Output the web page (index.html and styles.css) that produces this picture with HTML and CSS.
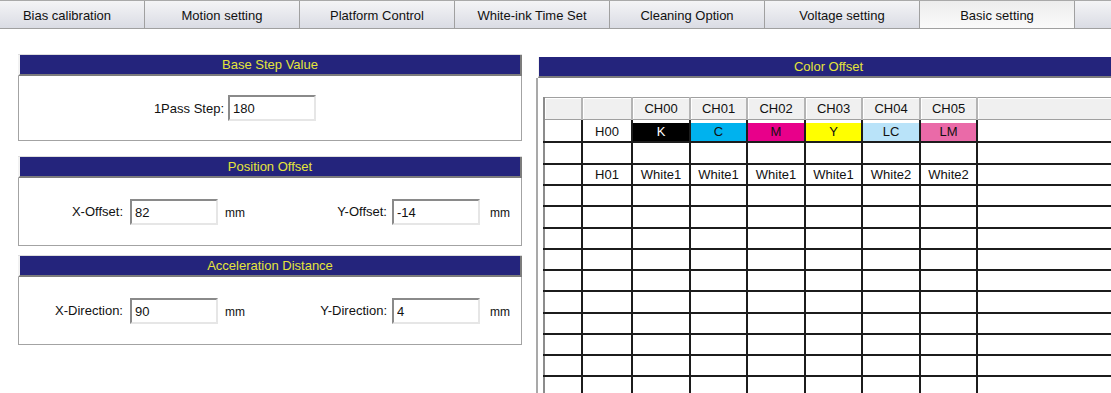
FILE: index.html
```html
<!DOCTYPE html>
<html>
<head>
    <title>Basic setting</title>
    <link rel="stylesheet" href="styles.css">
</head>
<body>
    <div class="tabs">
        <div class="tab first">Bias calibration</div>
        <div class="tab">Motion setting</div>
        <div class="tab">Platform Control</div>
        <div class="tab">White-ink Time Set</div>
        <div class="tab">Cleaning Option</div>
        <div class="tab">Voltage setting</div>
        <div class="tab active">Basic setting</div>
        <div class="tab"></div>
    </div>

    <div class="main">
        <div class="left">
            <div class="panel p1">
                <div class="panel-head">Base Step Value</div>
                <div class="panel-body b1">
                    <span class="lbl step">1Pass Step:</span>
                    <input class="field" type="text" value="180">
                </div>
            </div>

            <div class="panel p2">
                <div class="panel-head">Position Offset</div>
                <div class="panel-body">
                    <span class="lbl">X-Offset:</span>
                    <input class="field" type="text" value="82">
                    <span class="unit">mm</span>
                    <span class="lbl wide">Y-Offset:</span>
                    <input class="field" type="text" value="-14">
                    <span class="unit last">mm</span>
                </div>
            </div>

            <div class="panel p3">
                <div class="panel-head">Acceleration Distance</div>
                <div class="panel-body">
                    <span class="lbl">X-Direction:</span>
                    <input class="field" type="text" value="90">
                    <span class="unit">mm</span>
                    <span class="lbl wide">Y-Direction:</span>
                    <input class="field" type="text" value="4">
                    <span class="unit last">mm</span>
                </div>
            </div>
        </div>

        <div class="right">
            <div class="panel-head">Color Offset</div>
            <div class="right-body">
                <table class="grid">
                    <colgroup>
                        <col style="width:38px"><col style="width:50px">
                        <col style="width:58px"><col style="width:57px">
                        <col style="width:58px"><col style="width:57px">
                        <col style="width:58px"><col style="width:57px">
                        <col>
                    </colgroup>
                    <tr class="head">
                        <th></th><th></th><th>CH00</th><th>CH01</th><th>CH02</th><th>CH03</th><th>CH04</th><th>CH05</th><th></th>
                    </tr>
                    <tr class="colors t">
                        <td></td><td>H00</td>
                        <td class="k">K</td><td class="c">C</td><td class="m">M</td>
                        <td class="y">Y</td><td class="lc">LC</td><td class="lm">LM</td><td></td>
                    </tr>
                    <tr class="t"><td></td><td></td><td></td><td></td><td></td><td></td><td></td><td></td><td></td></tr>
                    <tr>
                        <td></td><td>H01</td>
                        <td>White1</td><td>White1</td><td>White1</td><td>White1</td><td>White2</td><td>White2</td><td></td>
                    </tr>
                    <tr><td></td><td></td><td></td><td></td><td></td><td></td><td></td><td></td><td></td></tr>
                    <tr class="t"><td></td><td></td><td></td><td></td><td></td><td></td><td></td><td></td><td></td></tr>
                    <tr><td></td><td></td><td></td><td></td><td></td><td></td><td></td><td></td><td></td></tr>
                    <tr><td></td><td></td><td></td><td></td><td></td><td></td><td></td><td></td><td></td></tr>
                    <tr><td></td><td></td><td></td><td></td><td></td><td></td><td></td><td></td><td></td></tr>
                    <tr class="t"><td></td><td></td><td></td><td></td><td></td><td></td><td></td><td></td><td></td></tr>
                    <tr><td></td><td></td><td></td><td></td><td></td><td></td><td></td><td></td><td></td></tr>
                    <tr><td></td><td></td><td></td><td></td><td></td><td></td><td></td><td></td><td></td></tr>
                    <tr><td></td><td></td><td></td><td></td><td></td><td></td><td></td><td></td><td></td></tr>
                    <tr><td></td><td></td><td></td><td></td><td></td><td></td><td></td><td></td><td></td></tr>
                </table>
            </div>
        </div>
    </div>
</body>
</html>
```

FILE: styles.css
```css
* { box-sizing: border-box; }
body { margin: 0; background: #fff; font-family: "Liberation Sans", Arial, sans-serif; font-size: 13px; color: #111; overflow: hidden; height: 393px; }

.tabs { display: flex; height: 29px; border-top: 1px solid #a9a9a9; border-bottom: 1px solid #a0a0a0; overflow: hidden; }
.tab { flex: none; width: 155px; height: 27px; line-height: 29px; text-align: center; border-right: 1px solid #a0a0a0; background: linear-gradient(#f4f4f6, #dadce4); }
.tab.first { margin-left: -10px; }
.tab.active { background: linear-gradient(#ededed, #fbfbfb); height: 28px; }

.main { display: flex; align-items: flex-start; padding-top: 25px; }
.left { flex: none; width: 504px; margin-left: 18px; }

.panel { border-top: 1px solid #dedede; }
.p2 { margin-top: 15px; }
.p3 { margin-top: 9px; }
.panel-head { height: 21px; line-height: 19px; text-align: center; background: #24247c; color: #e4e43a; border-left: 2px solid #f2f2f2; border-right: 2px solid #7c7c7c; border-bottom: 2px solid #7c7c7c; }
.panel-body { display: flex; align-items: center; height: 68px; border: 1px solid #a3a3a3; border-top: none; }
.b1 { height: 65px; }

.lbl { width: 104px; text-align: right; margin-right: 7px; }
.lbl.step { width: 205px; margin-right: 4px; }
.lbl.wide { width: 122px; margin-right: 5px; }
.unit { width: 40px; margin-left: 7px; font-size: 12px; padding-top: 3px; }
.unit.last { width: auto; margin-left: 10px; }
.field { width: 88px; height: 26px; padding: 1px 3px 0; font: 13px "Liberation Sans", Arial, sans-serif; color: #111; border: 2px solid; border-color: #8a8a8a #e6e6e6 #e6e6e6 #8a8a8a; background: #fff; outline: none; }

.right { flex: none; width: 584px; margin-left: 14px; margin-top: 3px; }
.right .panel-head { margin-left: 2px; border-left: 1px solid #f2f2f2; height: 21px; }
.right-body { height: 330px; border-left: 2px solid #a9a9a9; padding: 19px 0 0 5px; overflow: hidden; }

.grid { border-collapse: collapse; table-layout: fixed; width: 590px; border-left: 2px solid #8c8c8c; border-top: 1px solid #a0a0a0; }
.grid th { height: 22px; padding: 0; font-weight: normal; background: #f0f0f0; border-right: 2px solid #b4b4b4; border-bottom: 1px solid #a0a0a0; box-shadow: inset 1px 1px 0 #fff; }
.grid td { height: 21px; padding: 0; text-align: center; border-right: 2px solid #1c1c1c; border-bottom: 2px solid #1c1c1c; }
.grid tr.t td { height: 22px; }
.grid tr.colors td { padding-top: 3px; box-shadow: inset 0 3px 0 #fff; }
.grid td.k { background: #000; color: #fff; }
.grid td.c { background: #00b2ee; }
.grid td.m { background: #e8008a; }
.grid td.y { background: #ffff00; }
.grid td.lc { background: #b9e3f9; }
.grid td.lm { background: #ea6aa8; }
```
